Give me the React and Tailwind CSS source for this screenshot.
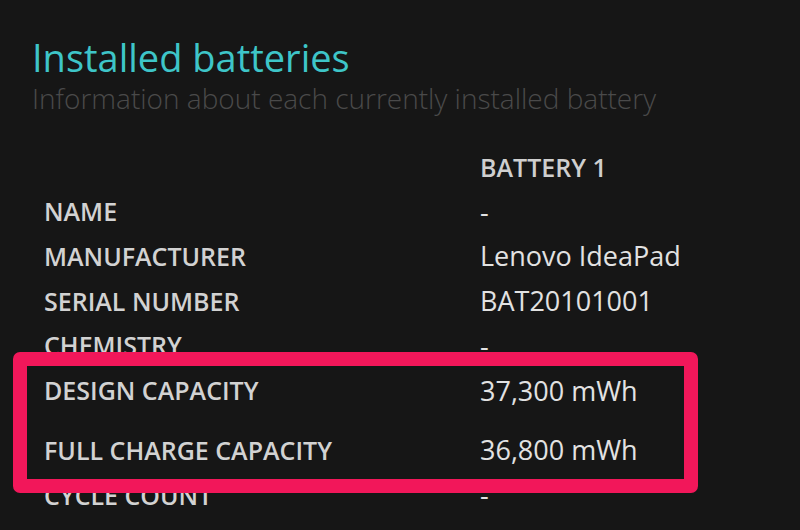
import React from 'react';

const rows = [
  { label: 'NAME', value: '-', cls: 'h-[44px]' },
  { label: 'MANUFACTURER', value: 'Lenovo IdeaPad', cls: 'h-[45px]' },
  { label: 'SERIAL NUMBER', value: 'BAT20101001', cls: 'h-[45px]' },
  { label: 'CHEMISTRY', value: '-', cls: 'h-[44px]' },
  { label: 'DESIGN CAPACITY', value: '37,300 mWh', cls: 'h-[46px]' },
  { label: 'FULL CHARGE CAPACITY', value: '36,800 mWh', cls: 'h-[45px] mt-[14px]' },
  { label: 'CYCLE COUNT', value: '-', cls: 'h-[45px]' },
];

export default function App() {
  return (
    <div className="relative w-[800px] h-[530px] overflow-hidden bg-[#161616] font-['Open_Sans',sans-serif]">
      <div className="pl-[32px] pt-[34px]">
        <h1 className="text-[38px] leading-[46px] text-[#3ec5c8]">Installed batteries</h1>
        <p className="text-[28px] leading-[36px] font-light text-[#4a4a4a]">
          Information about each currently installed battery
        </p>
      </div>

      <div className="mt-[30px] pl-[44px]">
        <div className="flex items-center h-[44px]">
          <div className="w-[436px]" />
          <div className="text-[25px] font-semibold text-[#cfcfcf]">BATTERY 1</div>
        </div>
        {rows.map((r) => (
          <div key={r.label} className={`flex items-center ${r.cls}`}>
            <div className="w-[436px] text-[25px] font-semibold text-[#d2d2d2]">{r.label}</div>
            <div className="text-[27px] text-[#e2e2e2]">{r.value}</div>
          </div>
        ))}
      </div>

      {/* highlight box drawn over the table */}
      <div className="absolute left-[13px] top-[352px] w-[685px] h-[141px] rounded-[7px] border-[14px] border-[#f2175a]" />
    </div>
  );
}
